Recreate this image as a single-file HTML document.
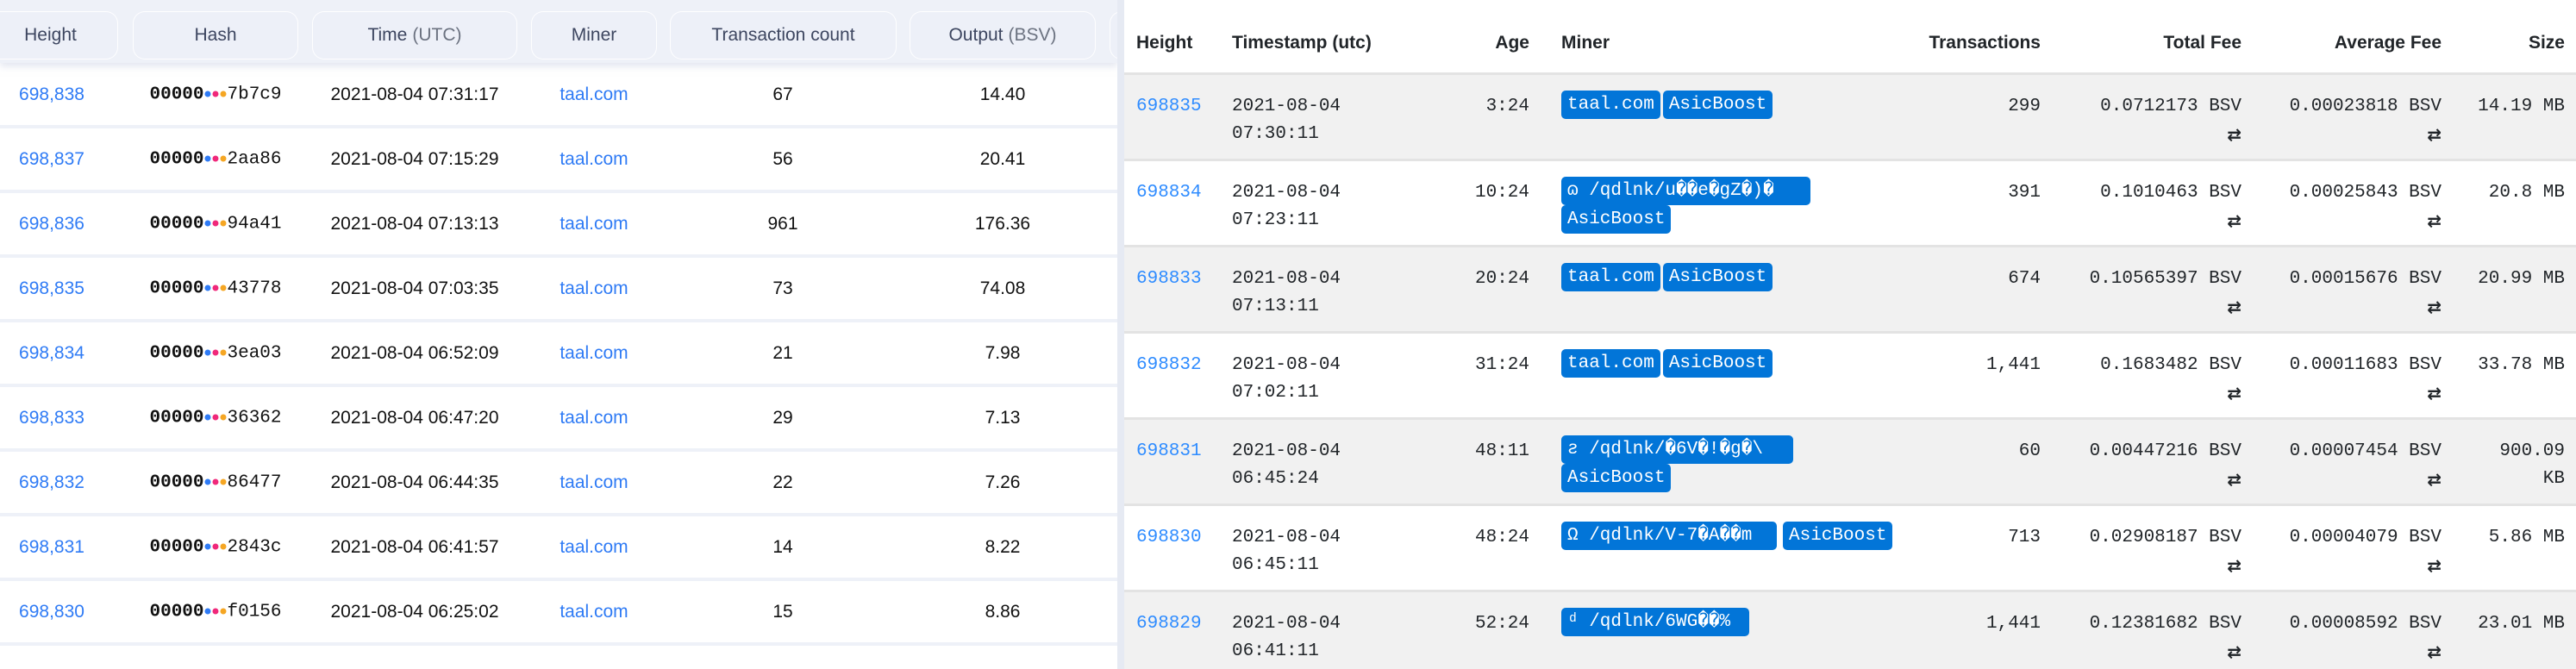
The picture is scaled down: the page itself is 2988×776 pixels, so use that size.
<!DOCTYPE html>
<html><head><meta charset="utf-8"><style>
*{margin:0;padding:0;box-sizing:border-box}
body{width:2988px;height:776px;overflow:hidden;background:#fff;position:relative;font-family:"Liberation Sans",Arial,sans-serif}
#L{position:absolute;left:0;top:0;width:1296px;height:776px;background:#fff;overflow:hidden}
#Lh{position:absolute;left:0;top:0;width:1296px;height:73px;background:#eef1f8;box-shadow:0 4px 8px rgba(200,205,225,.5)}
.hb{position:absolute;top:13px;height:56px;border:1px solid rgba(255,255,255,.9);border-radius:14px;background:#edf0f8;color:#3d4660;font-size:21px;font-weight:500;display:flex;align-items:center;justify-content:center}
.hb span{color:#6b7280;font-weight:normal;margin-left:6px}
.sep{position:absolute;left:0;width:1296px;height:4px;background:#eef1f8}
.lc{position:absolute;transform:translate(-50%,-50%);font-size:21px;color:#111;white-space:nowrap}
.blue{color:#2f7bf5}
.hash{font-family:"Liberation Mono",monospace;font-size:21px}
.hash b{font-weight:bold}
.d{display:inline-block;width:7px;height:7px;border-radius:50%;margin:0 1px;vertical-align:middle}
#div{position:absolute;left:1296px;top:0;width:8px;height:776px;background:#e6eaf3}
#R{position:absolute;left:1304px;top:0;width:1684px;height:776px;background:#fff;overflow:hidden}
.rh{position:absolute;top:38px;font-size:21px;font-weight:bold;color:#212529;white-space:nowrap}
.row{position:absolute;left:0;width:1684px;height:100px;border-top:3px solid #e3e3e3}
.g{background:#f1f1f1}
.m{position:absolute;font-family:"Liberation Mono","DejaVu Sans Mono",monospace;font-size:21px;line-height:32px;color:#212529;white-space:nowrap}
.r{text-align:right}
.lk{color:#2f8cff}
.mn{position:absolute;left:507px;top:18px;width:400px;font-family:"Liberation Mono","DejaVu Sans Mono",monospace;font-size:21px;line-height:32px;white-space:normal}
.bd{display:inline-block;background:#0275d8;color:#fff;border-radius:5px;padding:0 7px;height:33px;line-height:33px;white-space:nowrap;margin-right:3px;vertical-align:top;overflow:hidden}
.ar{font-family:"DejaVu Sans",sans-serif;font-weight:bold;font-size:20px}
.t{top:21px}
</style></head><body>
<div id="L">
<div id="Lh"></div>
<div class="hb" style="left:-20px;width:157px">Height</div>
<div class="hb" style="left:154px;width:192px">Hash</div>
<div class="hb" style="left:362px;width:238px">Time<span>(UTC)</span></div>
<div class="hb" style="left:616px;width:146px">Miner</div>
<div class="hb" style="left:777px;width:263px">Transaction count</div>
<div class="hb" style="left:1055px;width:216px">Output<span>(BSV)</span></div>
<div class="hb" style="left:1287px;width:100px"></div>
<div class="sep" style="top:145px"></div><div class="sep" style="top:220px"></div><div class="sep" style="top:295px"></div><div class="sep" style="top:370px"></div><div class="sep" style="top:445px"></div><div class="sep" style="top:520px"></div><div class="sep" style="top:595px"></div><div class="sep" style="top:670px"></div><div class="sep" style="top:745px"></div>

<div class="lc blue" style="left:60px;top:110px">698,838</div><div class="lc hash" style="left:250px;top:110px"><b>00000</b><i class="d" style="background:#2f7bf5"></i><i class="d" style="background:#f0287a"></i><i class="d" style="background:#f5a623"></i>7b7c9</div><div class="lc" style="left:481px;top:110px">2021-08-04 07:31:17</div><div class="lc blue" style="left:689px;top:110px">taal.com</div><div class="lc" style="left:908px;top:110px">67</div><div class="lc" style="left:1163px;top:110px">14.40</div>

<div class="lc blue" style="left:60px;top:185px">698,837</div><div class="lc hash" style="left:250px;top:185px"><b>00000</b><i class="d" style="background:#2f7bf5"></i><i class="d" style="background:#f0287a"></i><i class="d" style="background:#f5a623"></i>2aa86</div><div class="lc" style="left:481px;top:185px">2021-08-04 07:15:29</div><div class="lc blue" style="left:689px;top:185px">taal.com</div><div class="lc" style="left:908px;top:185px">56</div><div class="lc" style="left:1163px;top:185px">20.41</div>

<div class="lc blue" style="left:60px;top:260px">698,836</div><div class="lc hash" style="left:250px;top:260px"><b>00000</b><i class="d" style="background:#2f7bf5"></i><i class="d" style="background:#f0287a"></i><i class="d" style="background:#f5a623"></i>94a41</div><div class="lc" style="left:481px;top:260px">2021-08-04 07:13:13</div><div class="lc blue" style="left:689px;top:260px">taal.com</div><div class="lc" style="left:908px;top:260px">961</div><div class="lc" style="left:1163px;top:260px">176.36</div>

<div class="lc blue" style="left:60px;top:335px">698,835</div><div class="lc hash" style="left:250px;top:335px"><b>00000</b><i class="d" style="background:#2f7bf5"></i><i class="d" style="background:#f0287a"></i><i class="d" style="background:#f5a623"></i>43778</div><div class="lc" style="left:481px;top:335px">2021-08-04 07:03:35</div><div class="lc blue" style="left:689px;top:335px">taal.com</div><div class="lc" style="left:908px;top:335px">73</div><div class="lc" style="left:1163px;top:335px">74.08</div>

<div class="lc blue" style="left:60px;top:410px">698,834</div><div class="lc hash" style="left:250px;top:410px"><b>00000</b><i class="d" style="background:#2f7bf5"></i><i class="d" style="background:#f0287a"></i><i class="d" style="background:#f5a623"></i>3ea03</div><div class="lc" style="left:481px;top:410px">2021-08-04 06:52:09</div><div class="lc blue" style="left:689px;top:410px">taal.com</div><div class="lc" style="left:908px;top:410px">21</div><div class="lc" style="left:1163px;top:410px">7.98</div>

<div class="lc blue" style="left:60px;top:485px">698,833</div><div class="lc hash" style="left:250px;top:485px"><b>00000</b><i class="d" style="background:#2f7bf5"></i><i class="d" style="background:#f0287a"></i><i class="d" style="background:#f5a623"></i>36362</div><div class="lc" style="left:481px;top:485px">2021-08-04 06:47:20</div><div class="lc blue" style="left:689px;top:485px">taal.com</div><div class="lc" style="left:908px;top:485px">29</div><div class="lc" style="left:1163px;top:485px">7.13</div>

<div class="lc blue" style="left:60px;top:560px">698,832</div><div class="lc hash" style="left:250px;top:560px"><b>00000</b><i class="d" style="background:#2f7bf5"></i><i class="d" style="background:#f0287a"></i><i class="d" style="background:#f5a623"></i>86477</div><div class="lc" style="left:481px;top:560px">2021-08-04 06:44:35</div><div class="lc blue" style="left:689px;top:560px">taal.com</div><div class="lc" style="left:908px;top:560px">22</div><div class="lc" style="left:1163px;top:560px">7.26</div>

<div class="lc blue" style="left:60px;top:635px">698,831</div><div class="lc hash" style="left:250px;top:635px"><b>00000</b><i class="d" style="background:#2f7bf5"></i><i class="d" style="background:#f0287a"></i><i class="d" style="background:#f5a623"></i>2843c</div><div class="lc" style="left:481px;top:635px">2021-08-04 06:41:57</div><div class="lc blue" style="left:689px;top:635px">taal.com</div><div class="lc" style="left:908px;top:635px">14</div><div class="lc" style="left:1163px;top:635px">8.22</div>

<div class="lc blue" style="left:60px;top:710px">698,830</div><div class="lc hash" style="left:250px;top:710px"><b>00000</b><i class="d" style="background:#2f7bf5"></i><i class="d" style="background:#f0287a"></i><i class="d" style="background:#f5a623"></i>f0156</div><div class="lc" style="left:481px;top:710px">2021-08-04 06:25:02</div><div class="lc blue" style="left:689px;top:710px">taal.com</div><div class="lc" style="left:908px;top:710px">15</div><div class="lc" style="left:1163px;top:710px">8.86</div>
</div>
<div id="div"></div>
<div id="R">
<div class="rh" style="left:14px">Height</div>
<div class="rh" style="left:125px">Timestamp (utc)</div>
<div class="rh" style="right:1214px">Age</div>
<div class="rh" style="left:507px">Miner</div>
<div class="rh" style="right:621px">Transactions</div>
<div class="rh" style="right:388px">Total Fee</div>
<div class="rh" style="right:156px">Average Fee</div>
<div class="rh" style="right:13px">Size</div>

<div class="row g" style="top:84px">
<div class="m lk t" style="left:14px">698835</div>
<div class="m t" style="left:125px">2021-08-04<br>07:30:11</div>
<div class="m r t" style="right:1214px">3:24</div>
<div class="mn"><span class="bd">taal.com</span><span class="bd">AsicBoost</span></div>
<div class="m r t" style="right:621px">299</div>
<div class="m r t" style="right:388px">0.0712173 BSV<br><span class="ar">⇄</span></div>
<div class="m r t" style="right:156px">0.00023818 BSV<br><span class="ar">⇄</span></div>
<div class="m r t" style="right:13px">14.19 MB</div>
</div>

<div class="row" style="top:184px">
<div class="m lk t" style="left:14px">698834</div>
<div class="m t" style="left:125px">2021-08-04<br>07:23:11</div>
<div class="m r t" style="right:1214px">10:24</div>
<div class="mn"><span class="bd" style="width:289px">ɷ /qdlnk/u��e�gZ�)�</span><br><span class="bd">AsicBoost</span></div>
<div class="m r t" style="right:621px">391</div>
<div class="m r t" style="right:388px">0.1010463 BSV<br><span class="ar">⇄</span></div>
<div class="m r t" style="right:156px">0.00025843 BSV<br><span class="ar">⇄</span></div>
<div class="m r t" style="right:13px">20.8 MB</div>
</div>

<div class="row g" style="top:284px">
<div class="m lk t" style="left:14px">698833</div>
<div class="m t" style="left:125px">2021-08-04<br>07:13:11</div>
<div class="m r t" style="right:1214px">20:24</div>
<div class="mn"><span class="bd">taal.com</span><span class="bd">AsicBoost</span></div>
<div class="m r t" style="right:621px">674</div>
<div class="m r t" style="right:388px">0.10565397 BSV<br><span class="ar">⇄</span></div>
<div class="m r t" style="right:156px">0.00015676 BSV<br><span class="ar">⇄</span></div>
<div class="m r t" style="right:13px">20.99 MB</div>
</div>

<div class="row" style="top:384px">
<div class="m lk t" style="left:14px">698832</div>
<div class="m t" style="left:125px">2021-08-04<br>07:02:11</div>
<div class="m r t" style="right:1214px">31:24</div>
<div class="mn"><span class="bd">taal.com</span><span class="bd">AsicBoost</span></div>
<div class="m r t" style="right:621px">1,441</div>
<div class="m r t" style="right:388px">0.1683482 BSV<br><span class="ar">⇄</span></div>
<div class="m r t" style="right:156px">0.00011683 BSV<br><span class="ar">⇄</span></div>
<div class="m r t" style="right:13px">33.78 MB</div>
</div>

<div class="row g" style="top:484px">
<div class="m lk t" style="left:14px">698831</div>
<div class="m t" style="left:125px">2021-08-04<br>06:45:24</div>
<div class="m r t" style="right:1214px">48:11</div>
<div class="mn"><span class="bd" style="width:269px">ƨ /qdlnk/�6V�!�g�\</span><br><span class="bd">AsicBoost</span></div>
<div class="m r t" style="right:621px">60</div>
<div class="m r t" style="right:388px">0.00447216 BSV<br><span class="ar">⇄</span></div>
<div class="m r t" style="right:156px">0.00007454 BSV<br><span class="ar">⇄</span></div>
<div class="m r t" style="right:13px">900.09<br>KB</div>
</div>

<div class="row" style="top:584px">
<div class="m lk t" style="left:14px">698830</div>
<div class="m t" style="left:125px">2021-08-04<br>06:45:11</div>
<div class="m r t" style="right:1214px">48:24</div>
<div class="mn"><span class="bd" style="width:250px">Ω /qdlnk/V-7�A��m</span><span class="bd" style="margin-left:4px">AsicBoost</span></div>
<div class="m r t" style="right:621px">713</div>
<div class="m r t" style="right:388px">0.02908187 BSV<br><span class="ar">⇄</span></div>
<div class="m r t" style="right:156px">0.00004079 BSV<br><span class="ar">⇄</span></div>
<div class="m r t" style="right:13px">5.86 MB</div>
</div>

<div class="row g" style="top:684px">
<div class="m lk t" style="left:14px">698829</div>
<div class="m t" style="left:125px">2021-08-04<br>06:41:11</div>
<div class="m r t" style="right:1214px">52:24</div>
<div class="mn"><span class="bd" style="width:218px">ᵈ /qdlnk/6WG��%</span></div>
<div class="m r t" style="right:621px">1,441</div>
<div class="m r t" style="right:388px">0.12381682 BSV<br><span class="ar">⇄</span></div>
<div class="m r t" style="right:156px">0.00008592 BSV<br><span class="ar">⇄</span></div>
<div class="m r t" style="right:13px">23.01 MB</div>
</div>
</div>
</body></html>
